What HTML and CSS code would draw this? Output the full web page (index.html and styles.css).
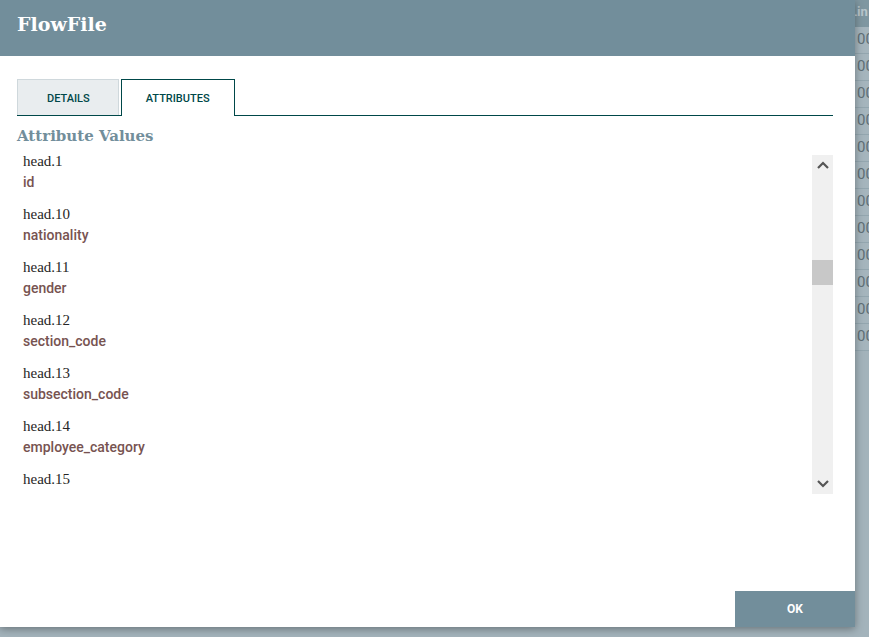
FILE: index.html
```html
<!DOCTYPE html>
<html lang="en">
<head>
    <meta charset="UTF-8">
    <title>FlowFile</title>
    <link rel="stylesheet" href="styles.css">
</head>
<body>
    <!-- queue listing behind the dialog -->
    <div class="backdrop">
        <div class="queue">
            <div class="queue-head">Lin</div>
            <div class="queue-row">00</div>
            <div class="queue-row">00</div>
            <div class="queue-row">00</div>
            <div class="queue-row">00</div>
            <div class="queue-row">00</div>
            <div class="queue-row">00</div>
            <div class="queue-row">00</div>
            <div class="queue-row">00</div>
            <div class="queue-row">00</div>
            <div class="queue-row">00</div>
            <div class="queue-row">00</div>
            <div class="queue-row">00</div>
        </div>
    </div>

    <div class="dialog">
        <header class="dialog-header">
            <h1>FlowFile</h1>
        </header>

        <div class="dialog-content">
            <div class="tabs">
                <div class="tab">Details</div>
                <div class="tab selected">Attributes</div>
            </div>

            <h2 class="section-title">Attribute Values</h2>

            <div class="attr-list">
                <div class="attr-items">
                    <div class="attr">
                        <div class="attr-name">head.1</div>
                        <div class="attr-value">id</div>
                    </div>
                    <div class="attr">
                        <div class="attr-name">head.10</div>
                        <div class="attr-value">nationality</div>
                    </div>
                    <div class="attr">
                        <div class="attr-name">head.11</div>
                        <div class="attr-value">gender</div>
                    </div>
                    <div class="attr">
                        <div class="attr-name">head.12</div>
                        <div class="attr-value">section_code</div>
                    </div>
                    <div class="attr">
                        <div class="attr-name">head.13</div>
                        <div class="attr-value">subsection_code</div>
                    </div>
                    <div class="attr">
                        <div class="attr-name">head.14</div>
                        <div class="attr-value">employee_category</div>
                    </div>
                    <div class="attr">
                        <div class="attr-name">head.15</div>
                    </div>
                </div>

                <!-- scrollbar track -->
                <div class="scrollbar">
                    <svg class="arrow" width="14" height="10" viewBox="0 0 14 10">
                        <path d="M2 8 L7 3 L12 8" fill="none" stroke="#555" stroke-width="2.2"/>
                    </svg>
                    <div class="track">
                        <div class="thumb"></div>
                    </div>
                    <svg class="arrow" width="14" height="10" viewBox="0 0 14 10">
                        <path d="M2 2 L7 7 L12 2" fill="none" stroke="#555" stroke-width="2.2"/>
                    </svg>
                </div>
            </div>
        </div>

        <div class="dialog-footer">
            <button class="button">OK</button>
        </div>
    </div>
</body>
</html>
```

FILE: styles.css
```css
body {
    margin: 0;
    padding: 0;
    font-family: Roboto, "Liberation Sans", sans-serif;
    background-color: #a3b3bb;
    height: 637px;
    overflow: hidden;
}

/* Fila por trás do diálogo */
.backdrop {
    display: flex;
    justify-content: flex-end;
}

.queue {
    width: 40px;
    background-color: #a5b5bd;
    overflow: hidden;
    white-space: nowrap;
}

.queue-head {
    height: 27px;
    line-height: 23px;
    background-color: #7f97a1;
    color: #b9c6cc;
    font-size: 13px;
    font-weight: bold;
    padding-left: 21px;
}

.queue-row {
    height: 26px;
    line-height: 24px;
    border-bottom: 1px solid #93a6af;
    color: #5f6f76;
    font-size: 15px;
    padding-left: 28px;
}

.dialog {
    position: absolute;
    top: 0;
    left: 0;
    width: 855px;
    height: 627px;
    background-color: #ffffff;
    box-shadow: 0 2px 8px rgba(0, 0, 0, 0.35);
    display: flex;
    flex-direction: column;
}

.dialog-header {
    height: 56px;
    background-color: #728e9b;
    padding: 0 17px;
    display: flex;
    align-items: center;
}

.dialog-header h1 {
    margin: 0;
    font-family: "DejaVu Serif", serif;
    font-size: 19px;
    font-weight: bold;
    color: #ffffff;
    padding-bottom: 8px;
}

.dialog-content {
    flex: 1;
    padding: 23px 22px 0 17px;
}

.tabs {
    display: flex;
    gap: 2px;
    border-bottom: 1px solid #004849;
}

.tab {
    height: 35px;
    line-height: 38px;
    padding: 0 28px 0 29px;
    font-size: 11px;
    font-weight: 500;
    text-transform: uppercase;
    color: #004849;
    background-color: #e9edef;
    border: 1px solid #cfd8dc;
    border-bottom: none;
}

.tab.selected {
    background-color: #ffffff;
    border-color: #004849;
    padding: 0 24px 0 24px;
    margin-bottom: -1px;
    height: 36px;
}

.section-title {
    margin: 10px 0 9px;
    font-family: "DejaVu Serif", serif;
    font-size: 15px;
    font-weight: bold;
    color: #728e9b;
    line-height: 20px;
}

.attr-list {
    height: 339px;
    display: flex;
}

.attr-items {
    flex: 1;
    overflow: hidden;
    padding-left: 6px;
}

.attr {
    height: 53px;
}

.attr-name {
    font-family: "Liberation Serif", serif;
    font-size: 15px;
    color: #262626;
    line-height: 12px;
}

.attr-value {
    font-size: 14px;
    font-weight: 500;
    color: #775351;
    line-height: 30px;
}

.scrollbar {
    width: 21px;
    background-color: #f0f0f0;
    display: flex;
    flex-direction: column;
    align-items: center;
}

.arrow {
    margin: 5px 0;
}

.track {
    flex: 1;
    width: 100%;
}

.thumb {
    margin-top: 85px;
    height: 25px;
    background-color: #c8c8c8;
}

.dialog-footer {
    display: flex;
    justify-content: flex-end;
}

.button {
    width: 120px;
    height: 36px;
    border: none;
    background-color: #728e9b;
    color: #ffffff;
    font-family: Roboto, sans-serif;
    font-size: 12px;
    font-weight: bold;
    cursor: pointer;
}
```
